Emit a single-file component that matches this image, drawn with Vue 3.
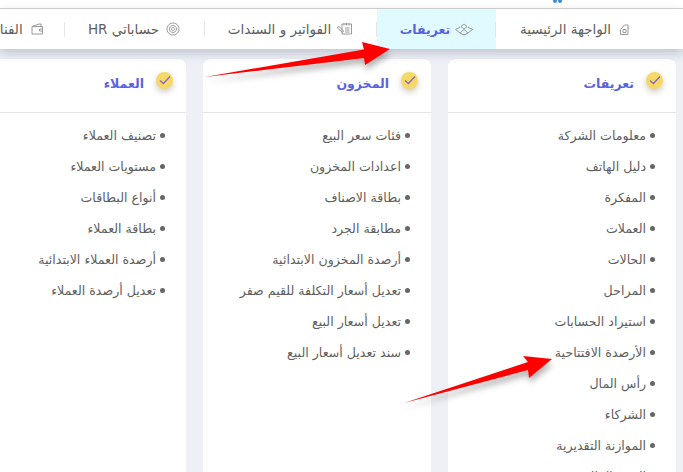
<template>
  <div class="page" dir="rtl">
    <div class="top-strip"><span class="blip"></span><span class="blip"></span></div>
    <nav class="tabs">
      <a v-for="tab in tabs" :key="tab.label" class="tab" :class="{ active: tab.active }" :style="{ width: tab.width + 'px' }">
        <svg class="tab-icon" viewBox="0 0 18 18" fill="none" stroke="#9a9a9a" stroke-width="1">
          <path v-for="d in tab.icon" :key="d" :d="d" />
        </svg>
        <span>{{ tab.label }}</span>
      </a>
    </nav>
    <main class="cards">
      <section v-for="card in cards" :key="card.title" class="card">
        <header class="card-head">
          <span class="badge">
            <svg viewBox="0 0 12 12" width="12" height="12" fill="none" stroke="#8a6cc0" stroke-width="1.4">
              <path d="M1 6.5l3.4 3L11 2.6" />
            </svg>
          </span>
          <h3>{{ card.title }}</h3>
        </header>
        <ul>
          <li v-for="item in card.items" :key="item">{{ item }}</li>
        </ul>
      </section>
    </main>
    <!-- red arrows drawn over the page -->
    <svg class="arrows" width="683" height="472" viewBox="0 0 683 472">
      <defs>
        <filter id="arrow-shadow" x="-20%" y="-50%" width="140%" height="220%">
          <feDropShadow dx="1" dy="5" stdDeviation="3" flood-color="#000" flood-opacity="0.3" />
        </filter>
      </defs>
      <path fill="#fe0000" filter="url(#arrow-shadow)" d="M205 77L364 49.5L362 42L390 49L365 65L364 58Z" />
      <path fill="#fe0000" filter="url(#arrow-shadow)" d="M404 403L528 362L523 356L552 359L529 378L528 370Z" />
    </svg>
  </div>
</template>

<script setup>
const tabs = [
  { label: 'الواجهة الرئيسية', width: 162, icon: ['M4.5 9.5L8.5 5H12V14.5H4.5Z', 'M12 7.5l1 1', 'M7 9.5h3v3H7z'] },
  { label: 'تعريفات', width: 119, active: true, icon: ['M9 4l3 2.5-3 2.5-3-2.5z', 'M5.5 7L0.5 9.5 5 13 9 9.5', 'M12.5 7l5 2.5L13 13 9 9.5', 'M5 13l4 2 4-2'] },
  { label: 'الفواتير و السندات', width: 172, icon: ['M6 4H15.5V14H6z', 'M8 3v2.5M10.5 3v2.5M13 3v2.5', 'M9 8h4.5M9 10h4.5M9 12h4.5', 'M2.5 6l5 5-1 1.5-5-4.5z'] },
  { label: 'حساباتي HR', width: 140, icon: ['M9 3a6 6 0 1 0 .01 0z', 'M9 5.5a3.5 3.5 0 1 0 .01 0z', 'M9 7.5a1.5 1.5 0 1 0 .01 0z'] },
  { label: 'الفنادق', width: 101, icon: ['M4 6.5h10.5v7.5H4z', 'M4 6.5L11 4h2v2.5', 'M11.5 9h3v2h-3z'] }
]

const cards = [
  {
    title: 'تعريفات',
    items: ['معلومات الشركة', 'دليل الهاتف', 'المفكرة', 'العملات', 'الحالات', 'المراحل', 'استيراد الحسابات', 'الأرصدة الافتتاحية', 'رأس المال', 'الشركاء', 'الموازنة التقديرية', 'السنة المالية']
  },
  {
    title: 'المخزون',
    items: ['فئات سعر البيع', 'اعدادات المخزون', 'بطاقة الاصناف', 'مطابقة الجرد', 'أرصدة المخزون الابتدائية', 'تعديل أسعار التكلفة للقيم صفر', 'تعديل أسعار البيع', 'سند تعديل أسعار البيع']
  },
  {
    title: 'العملاء',
    items: ['تصنيف العملاء', 'مستويات العملاء', 'أنواع البطاقات', 'بطاقة العملاء', 'أرصدة العملاء الابتدائية', 'تعديل أرصدة العملاء']
  }
]
</script>

<style>
html, body { margin: 0; overflow: hidden; }
</style>

<style scoped>
.page {
  position: relative;
  width: 683px;
  height: 472px;
  overflow: hidden;
  background: #eef0f6;
  font-family: "DejaVu Sans", "Noto Sans", sans-serif;
}

.top-strip {
  height: 8px;
  background: #fff;
  border-bottom: 1px solid #d4d4d4;
  display: flex;
  gap: 1px;
  padding-right: 121px;
}

.blip {
  width: 4px;
  height: 3px;
  background: #3f8fd8;
  border-radius: 0 0 2px 2px;
}

.tabs {
  display: flex;
  height: 40px;
  padding-right: 25px;
  background: #fff;
  box-shadow: 0 4px 10px rgba(80, 85, 110, 0.3);
  position: relative;
}

.tab {
  flex: none;
  display: flex;
  align-items: center;
  justify-content: center;
  gap: 5px;
  font-size: 13.5px;
  color: #606060;
  position: relative;
}

.tab + .tab::before {
  content: "";
  position: absolute;
  right: 0;
  top: 13px;
  height: 15px;
  width: 1px;
  background: #e6e6e6;
}

.tab.active {
  background: #e0fbff;
  color: #5a62e0;
  font-size: 12.5px;
  font-weight: 700;
}

.tab-icon {
  width: 18px;
  height: 18px;
  flex: none;
}

.cards {
  display: flex;
  gap: 17px;
  padding: 10px 7px 0 0;
}

.card {
  flex: none;
  width: 228px;
  height: 430px;
  background: #fff;
  border-radius: 8px 8px 0 0;
}

.card-head {
  display: flex;
  align-items: center;
  gap: 12px;
  height: 54px;
  padding-right: 13px;
  border-bottom: 1px solid #e4e4e4;
  box-sizing: border-box;
}

.badge {
  width: 17px;
  height: 17px;
  margin-top: -11px;
  border-radius: 50%;
  background: #f6d866;
  box-shadow: 0 3px 6px rgba(90, 80, 40, 0.3);
  display: flex;
  align-items: center;
  justify-content: center;
}

h3 {
  margin: 0 0 4px;
  font-size: 12.5px;
  font-weight: 700;
  color: #5a62e0;
}

ul {
  list-style: none;
  margin: 0;
  padding: 7px 30px 0 0;
}

li {
  position: relative;
  height: 31px;
  line-height: 31px;
  font-size: 12.6px;
  color: #606060;
  white-space: nowrap;
}

li::before {
  content: "";
  position: absolute;
  right: -9px;
  top: 13px;
  width: 5px;
  height: 5px;
  border-radius: 50%;
  background: #666;
}

.arrows {
  position: absolute;
  left: 0;
  top: 0;
  pointer-events: none;
}
</style>
